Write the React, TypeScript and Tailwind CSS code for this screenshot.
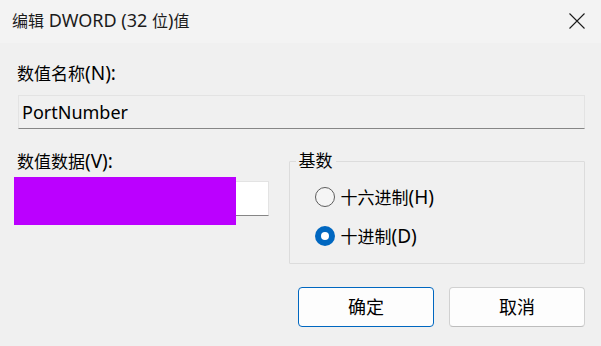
import React from "react";

const font = "font-['Noto_Sans','Noto_Sans_CJK_SC',sans-serif]";

// CJK part and Latin part sized separately, YaHei UI draws Latin larger than its CJK
function Mixed({ cjk, latin }: { cjk: string; latin: string }) {
  return (
    <span className="text-[17px] leading-[24px] text-black">
      {cjk}
      <span className="text-[19px]">{latin}</span>
    </span>
  );
}

function Radio({ checked, cjk, latin }: { checked?: boolean; cjk: string; latin: string }) {
  return (
    <div className="flex items-center h-[24px] gap-[6px]">
      {checked ? (
        <span className="w-[20px] h-[20px] rounded-full bg-[#0067c0] flex items-center justify-center">
          <span className="w-[8px] h-[8px] rounded-full bg-white" />
        </span>
      ) : (
        <span className="w-[20px] h-[20px] rounded-full border border-[#5d5d5d] bg-[#f5f5f5]" />
      )}
      <Mixed cjk={cjk} latin={latin} />
    </div>
  );
}

export default function App() {
  return (
    <div className={`w-[601px] h-[346px] bg-[#f0f0f0] ${font} overflow-hidden`}>
      {/* title bar */}
      <div className="h-[43px] bg-[#f3f3f3] flex items-center justify-between pl-[12px] pr-[16px]">
        <span className="text-[16px] leading-[24px] text-[#1b1b1b] -mt-[2px]">
          编辑<span className="text-[18px]"> DWORD (32 </span>位<span className="text-[18px]">)</span>值
        </span>
        <svg width="16" height="16" viewBox="0 0 16 16" className="-mt-[2px]">
          <path d="M0.5 0.5 L15.5 15.5 M15.5 0.5 L0.5 15.5" stroke="#1b1b1b" strokeWidth="1.1" fill="none" />
        </svg>
      </div>

      <div className="pl-[17px] pr-[16px]">
        <div className="mt-[18px] h-[24px] flex items-center">
          <Mixed cjk="数值名称" latin="(N):" />
        </div>
        <div className="mt-[10px] ml-[1px] w-[567px] h-[34px] border border-[#e3e3e3] border-b-[#868686] bg-[#f0f0f0] flex items-center pl-[3px]">
          <span className="text-[18px] leading-[24px] text-black">PortNumber</span>
        </div>

        <div className="mt-[20px] flex">
          <div className="w-[272px] relative">
            <div className="h-[24px] flex items-center">
              <Mixed cjk="数值数据" latin="(V):" />
            </div>
            <div className="mt-[8px] ml-[1px] w-[251px] h-[35px] bg-white border border-[#e3e3e3] border-b-[#868686]" />
            <div className="absolute left-[-3px] top-[28px] w-[222px] h-[48px] bg-[#bb00ff]" />
          </div>

          <fieldset className="w-[297px] h-[115px] border border-[#dcdcdc] rounded-[1px]">
            <legend className="ml-[6px] px-[3px] text-[17px] leading-[24px] text-black">基数</legend>
            <div className="pl-[25px] mt-[12px] flex flex-col gap-[15px]">
              <Radio cjk="十六进制" latin="(H)" />
              <Radio checked cjk="十进制" latin="(D)" />
            </div>
          </fieldset>
        </div>

        <div className="mt-[23px] flex justify-end gap-[15px]">
          <button className="w-[136px] h-[40px] rounded-[4px] bg-[#fdfdfd] border border-[#0067c0] text-[18px] leading-[24px] text-black">
            确定
          </button>
          <button className="w-[136px] h-[40px] rounded-[4px] bg-[#fdfdfd] border border-[#d1d1d1] border-b-[#bdbdbd] text-[18px] leading-[24px] text-black">
            取消
          </button>
        </div>
      </div>
    </div>
  );
}
